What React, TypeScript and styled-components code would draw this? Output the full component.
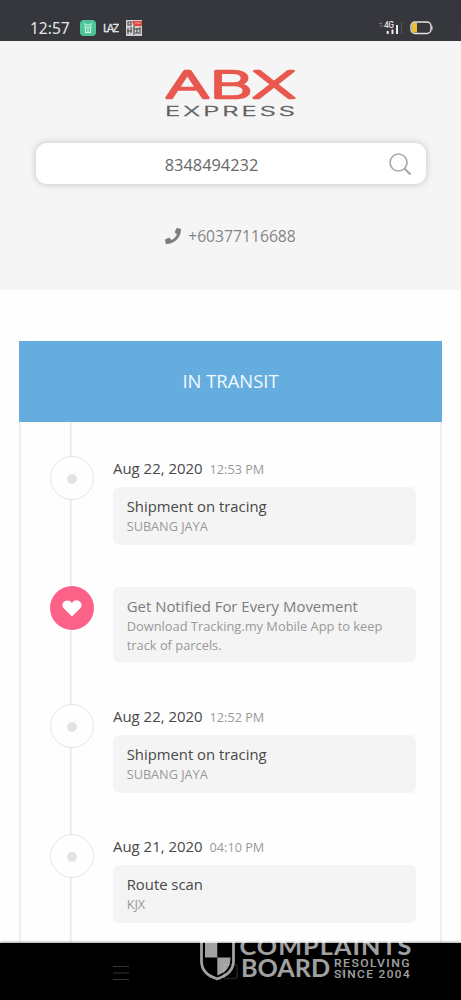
import React from "react";
import styled, { createGlobalStyle } from "styled-components";

const GlobalStyle = createGlobalStyle`
  * { box-sizing: border-box; }
  body { margin: 0; background: #fefefe; font-family: "Open Sans", sans-serif; }
`;

const Screen = styled.div`
  position: relative;
  display: flex;
  flex-direction: column;
  width: 461px;
  height: 1000px;
  overflow: hidden;
  background: #fefefe;
`;

const StatusBar = styled.header`
  flex: none;
  display: flex;
  align-items: center;
  justify-content: space-between;
  height: 41px;
  padding: 15px 28px 0 30px;
  background: linear-gradient(#35363e, #37383c);
  color: #e6e6e8;
`;

const StatusGroup = styled.div<{ $gap: number }>`
  display: flex;
  align-items: center;
  gap: ${(p) => p.$gap}px;
`;

const Clock = styled.span`
  width: 39px;
  margin-right: 4px;
  font: 400 15.5px/20px "Noto Sans", sans-serif;
  white-space: nowrap;
`;

const Hero = styled.section`
  flex: none;
  display: flex;
  flex-direction: column;
  align-items: center;
  height: 249px;
  padding-top: 20px;
  background: #f5f5f5;
`;

const SearchBox = styled.div`
  display: flex;
  align-items: center;
  width: 390px;
  height: 41px;
  margin-top: 22px;
  padding: 0 14px 0 0;
  border-radius: 11px;
  background: #fff;
  box-shadow: 0 0 7px 1px rgba(0, 0, 0, 0.16);
`;

const SearchValue = styled.span`
  flex: 1;
  padding: 2px 0 0 0;
  text-align: center;
  font-size: 16.4px;
  color: #686868;
`;

const Phone = styled.div`
  display: flex;
  align-items: center;
  gap: 7px;
  height: 24px;
  margin-top: 40px;
  font-size: 15.7px;
  color: #858585;
`;

const Card = styled.main`
  flex: none;
  width: 423px;
  height: 602px;
  margin: 51px 0 0 19px;
  overflow: hidden;
`;

const CardTitle = styled.h1`
  display: flex;
  align-items: center;
  justify-content: center;
  height: 81px;
  margin: 0;
  padding-bottom: 2px;
  background: #65addf;
  color: #f2faff;
  font-size: 18.4px;
  font-weight: 400;
`;

const Timeline = styled.ol`
  height: 521px;
  margin: 0;
  padding: 34px 0 0 29px;
  list-style: none;
  border: solid #f0f0f0;
  border-width: 0 2px;
  background: linear-gradient(#e9e9e9, #e9e9e9) 49px 0 / 1.5px 100% no-repeat;
`;

const Entry = styled.li<{ $height: number }>`
  display: flex;
  align-items: flex-start;
  gap: 19px;
  height: ${(p) => p.$height}px;
`;

const Marker = styled.div<{ $accent?: boolean }>`
  display: flex;
  align-items: center;
  justify-content: center;
  flex: none;
  width: 44px;
  height: 44px;
  border-radius: 50%;
  border: ${(p) => (p.$accent ? "none" : "1.5px solid #e6e6e6")};
  background: ${(p) => (p.$accent ? "#fc6288" : "#fefefe")};
`;

const Dot = styled.span`
  width: 10px;
  height: 10px;
  margin: 2px 1px 0 0;
  border-radius: 50%;
  background: #e2e2e2;
`;

const EntryBody = styled.div`
  width: 303px;
`;

const When = styled.div`
  display: flex;
  align-items: baseline;
  gap: 7px;
  height: 31px;
  line-height: 24px;
  font-size: 14.95px;
  color: #484848;
  white-space: nowrap;
`;

const Time = styled.span`
  font-size: 12.7px;
  color: #999;
`;

const Note = styled.div<{ $height: number; $offset?: number }>`
  height: ${(p) => p.$height}px;
  margin-top: ${(p) => p.$offset ?? 0}px;
  padding: 9px 13px 0 13.7px;
  border-radius: 6px;
  background: #f4f4f4;
`;

const NoteTitle = styled.div<{ $muted?: boolean }>`
  font-size: ${(p) => (p.$muted ? 14.95 : 14.85)}px;
  line-height: 21px;
  color: ${(p) => (p.$muted ? "#7d7d7d" : "#484848")};
  white-space: nowrap;
`;

const NoteText = styled.div<{ $size: number }>`
  font-size: ${(p) => p.$size}px;
  line-height: 19px;
  color: #999;
  white-space: nowrap;
`;

const NavBar = styled.nav`
  flex: none;
  height: 57px;
  padding: 21px 0 0 112px;
  background: #000;
  box-shadow: 0 -1px 2px rgba(0, 0, 0, 0.35);
  z-index: 1;
`;

const Watermark = styled.svg`
  position: absolute;
  left: 196px;
  top: 924px;
  z-index: 2;
`;

const entries = [
  { date: "Aug 22, 2020", time: "12:53 PM", title: "Shipment on tracing", place: "SUBANG JAYA" },
  null,
  { date: "Aug 22, 2020", time: "12:52 PM", title: "Shipment on tracing", place: "SUBANG JAYA" },
  { date: "Aug 21, 2020", time: "04:10 PM", title: "Route scan", place: "KJX" },
];

function AppBadge() {
  return (
    <svg width="16" height="16" viewBox="0 0 16 16" fill="none">
      <rect width="16" height="16" rx="4" fill="#4fc59b" />
      <path d="M4 3.500 6 5h4l2-1.500M4 7h8M5.500 7v5.500h5V7M8 8v4" stroke="#c9f3e3" strokeWidth="1.200" />
    </svg>
  );
}

function LazBadge() {
  return (
    <svg width="16" height="16" viewBox="0 0 16 16">
      <text x="0" y="12" fontFamily="Lato" fontSize="11" fill="#e4e4e4" stroke="#e4e4e4" strokeWidth=".3" textLength="16">LAZ</text>
    </svg>
  );
}

function CodeBadge() {
  return (
    <svg width="17" height="16" viewBox="0 0 17 16" fill="none">
      <rect width="16" height="16" fill="#cfcfcf" />
      <path d="M2 2h3v3H2zM2 8v6M5 7v6M8 6v9M11 8v5M14 7v7M1 11h5M7 9h7M9 13h4" stroke="#4b4747" strokeWidth="1.100" />
      <path d="M6 1h10v5H8z" fill="#d94a3c" />
      <path d="M9 3h6" stroke="#efaaa0" />
    </svg>
  );
}

function Signal() {
  return (
    <svg width="24" height="16" viewBox="0 0 24 16">
      <path d="M0 3.500h3M1 6h3" stroke="#777" />
      <text x="5" y="7.500" fontFamily="Roboto" fontSize="8.500" fontWeight="500" fill="#ddd" textLength="10">4G</text>
      <path d="M7.700 11h2v3h-2zM12.500 9.500h2V14h-2zM17 5h2v9h-2z" fill="#eee" />
      <path d="M22.500 2v12" stroke="#55565a" />
    </svg>
  );
}

function Battery() {
  return (
    <svg width="23" height="14" viewBox="0 0 23 14">
      <rect x="1" y="1" width="20" height="11.500" rx="4" fill="none" stroke="#e4e4e4" strokeWidth="1.400" />
      <path d="M3.500 2h3.500v9.500H3.500q-1.500 0-1.500-2V4q0-2 1.500-2z" fill="#edbd33" />
      <path d="M22 5v4" stroke="#ddd" />
    </svg>
  );
}

function Logo() {
  return (
    <svg width="136" height="60" viewBox="0 0 136 60">
      <text x="2.500" y="37" fontFamily="Inter" fontWeight="200" fontSize="37" fill="#e9584f" stroke="#e9584f" strokeWidth="2.600" strokeLinejoin="round" textLength="130" lengthAdjust="spacingAndGlyphs">ABX</text>
      <text x="2" y="55" fontFamily="Inter" fontWeight="300" fontSize="12.600" letterSpacing="1.500" fill="#5f5f5f" stroke="#5f5f5f" strokeWidth=".3" textLength="133" lengthAdjust="spacingAndGlyphs">EXPRESS</text>
    </svg>
  );
}

export default function App() {
  return (
    <Screen>
      <GlobalStyle />
      <StatusBar>
        <StatusGroup $gap={7}>
          <Clock>12:57</Clock>
          <AppBadge />
          <LazBadge />
          <CodeBadge />
        </StatusGroup>
        <StatusGroup $gap={7}>
          <Signal />
          <Battery />
        </StatusGroup>
      </StatusBar>
      <Hero>
        <Logo />
        <SearchBox>
          <SearchValue>8348494232</SearchValue>
          <svg width="24" height="24" viewBox="0 0 24 24" fill="none" stroke="#aaa">
            <circle cx="10.500" cy="10.500" r="8.500" strokeWidth="1.700" />
            <path d="m16.500 16.500 6 6" strokeWidth="2.200" />
          </svg>
        </SearchBox>
        <Phone>
          <svg width="16" height="16" viewBox="0 0 512 512" fill="#7f7f7f">
            <path d="M493.400 24.600l-104-24c-11.300-2.600-22.900 3.300-27.500 13.900l-48 112c-4.200 9.800-1.400 21.300 6.900 28l60.600 49.600c-36 76.700-98.900 140.500-177.200 177.200l-49.600-60.600c-6.800-8.300-18.200-11.100-28-6.900l-112 48C3.900 366.500-2 378.100.6 389.400l24 104C27.100 504.200 36.700 512 48 512c256.100 0 464-207.500 464-464 0-11.200-7.700-20.900-18.600-23.400z" />
          </svg>
          <span>+60377116688</span>
        </Phone>
      </Hero>
      <Card>
        <CardTitle>IN TRANSIT</CardTitle>
        <Timeline>
          {entries.map((entry, i) =>
            entry ? (
              <Entry key={i} $height={130}>
                <Marker><Dot /></Marker>
                <EntryBody>
                  <When>
                    <span>{entry.date}</span>
                    <Time>{entry.time}</Time>
                  </When>
                  <Note $height={58}>
                    <NoteTitle>{entry.title}</NoteTitle>
                    <NoteText $size={12.7}>{entry.place}</NoteText>
                  </Note>
                </EntryBody>
              </Entry>
            ) : (
              <Entry key={i} $height={118}>
                <Marker $accent>
                  <svg width="20" height="17" viewBox="0 0 20 17" fill="#fff">
                    <path d="M10 16.500 1.900 8.600C-.3 6.300.1 2.700 2.600 1.200 5-.2 8 .4 10 2.900 12-.2 15-.2 17.400 1.200c2.500 1.500 2.900 5.100.7 7.400z" />
                  </svg>
                </Marker>
                <EntryBody>
                  <Note $height={75} $offset={1}>
                    <NoteTitle $muted>Get Notified For Every Movement</NoteTitle>
                    <NoteText $size={12.85}>Download Tracking.my Mobile App to keep<br />track of parcels.</NoteText>
                  </Note>
                </EntryBody>
              </Entry>
            ),
          )}
        </Timeline>
      </Card>
      <NavBar>
        <svg width="18" height="16" viewBox="0 0 18 16" stroke="#353535" strokeWidth="1.200">
          <path d="M1 1.500h16M1 8h16M1 14.500h16" />
        </svg>
      </NavBar>
      <Watermark width="220" height="60" viewBox="0 -10 220 60">
        <rect x="28" y="30.500" width="13" height="14" rx="2" fill="none" stroke="#222" strokeWidth="1.500" />
        <path d="M143 38l6-5v11z" fill="#292929" />
        <g fill="#fff" opacity=".63">
          <path d="M5.500 6h30.500q1.500 0 1.500 2V27c0 9-6 14.500-16.200 17.800C11.500 42 5.500 36 5.500 27z" fill="none" stroke="#fff" strokeWidth="2.800" />
          <path d="M9 8h12.300v15.500H9zM21.300 23.500h13.200c0 9-3.500 14.500-13.200 18z" />
          <text x="43.500" y="21" fontFamily="Lato" fontWeight="700" fontSize="23.500" letterSpacing="1" textLength="173" lengthAdjust="spacingAndGlyphs">COMPLAINTS</text>
          <text x="45" y="43" fontFamily="Lato" fontWeight="700" fontSize="24" textLength="89" lengthAdjust="spacingAndGlyphs">BOARD</text>
          <text x="138" y="33" fontFamily="Roboto" fontWeight="500" fontSize="10" letterSpacing="1.200" textLength="77" lengthAdjust="spacingAndGlyphs">RESOLVING</text>
          <text x="138" y="44" fontFamily="Roboto" fontWeight="500" fontSize="10" letterSpacing="1.200" textLength="77" lengthAdjust="spacingAndGlyphs">SINCE 2004</text>
        </g>
      </Watermark>
    </Screen>
  );
}
